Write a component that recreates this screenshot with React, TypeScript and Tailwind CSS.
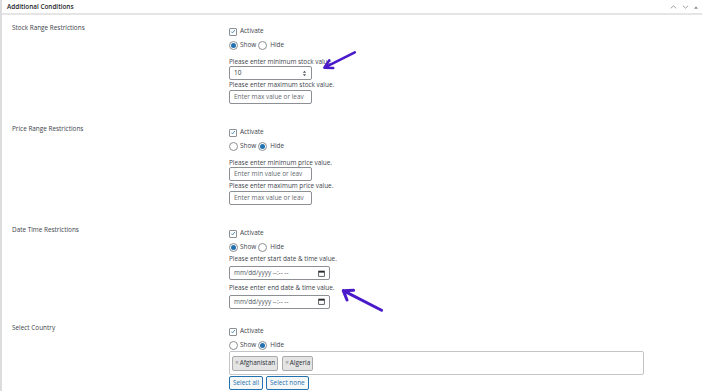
import React from "react";

const font = { fontFamily: '"Open Sans", "Noto Sans", Arial, sans-serif' };

function Check({ label }: { label: string }) {
  return (
    <div className="flex items-center gap-[3px] h-[9px]">
      <span className="flex h-[8px] w-[8px] items-center justify-center rounded-[1px] border border-[#8c8f94] bg-white">
        <svg viewBox="0 0 10 10" className="h-[7px] w-[7px]">
          <path d="M2 5.2 L4.2 7.4 L8.2 2.4" fill="none" stroke="#2271b1" strokeWidth="1.3" />
        </svg>
      </span>
      <span>{label}</span>
    </div>
  );
}

function Radio({ on, className = "" }: { on: boolean; className?: string }) {
  return (
    <span className={`flex h-[9px] w-[9px] items-center justify-center rounded-full border border-[#8c8f94] bg-white ${className}`}>
      {on && <span className="h-[5px] w-[5px] rounded-full bg-[#2271b1]" />}
    </span>
  );
}

function ShowHide({ show }: { show: boolean }) {
  return (
    <div className="flex items-center h-[9px] mt-[5px]">
      <Radio on={show} />
      <span className="ml-[2px]">Show</span>
      <Radio on={!show} className="ml-[2px]" />
      <span className="ml-[3px]">Hide</span>
    </div>
  );
}

function TextBox({ value, placeholder }: { value?: string; placeholder?: string }) {
  return (
    <div className="flex h-[14px] w-[83px] items-center justify-between rounded-[2px] border border-[#8c8f94] bg-white px-[4px]">
      {value ? <span className="text-[#2c3338]">{value}</span> : <span className="text-[#646970]">{placeholder}</span>}
      {value && (
        <svg viewBox="0 0 6 10" className="h-[9px] w-[5px]">
          <path d="M1 4 L3 1.8 L5 4 Z M1 6 L3 8.2 L5 6 Z" fill="#50575e" />
        </svg>
      )}
    </div>
  );
}

function DateBox() {
  return (
    <div className="flex h-[14px] w-[101px] items-center justify-between rounded-[2px] border border-[#8c8f94] bg-white px-[4px]">
      <span className="text-[#50575e]">mm/dd/yyyy --:-- --</span>
      <svg viewBox="0 0 10 10" className="h-[7px] w-[7px]">
        <rect x="1" y="1.5" width="8" height="7.5" fill="none" stroke="#1d2327" strokeWidth="1" />
        <rect x="1" y="1.5" width="8" height="2.2" fill="#1d2327" />
      </svg>
    </div>
  );
}

function Row({ label, children, h }: { label: string; children: React.ReactNode; h: string }) {
  return (
    <div className={`flex ${h}`}>
      <div className="w-[227px] shrink-0 pl-[10px] pt-[3px]">{label}</div>
      <div className="flex flex-col pt-[5px]">{children}</div>
    </div>
  );
}

function Arrow({ className, d }: { className: string; d: string }) {
  return (
    <svg className={`absolute ${className}`} viewBox="0 0 50 30" fill="none">
      <path d={d} stroke="#4a19c9" strokeWidth="3.2" strokeLinecap="round" strokeLinejoin="round" />
    </svg>
  );
}

export default function App() {
  return (
    <div className="relative h-[391px] w-[702px] overflow-hidden bg-white text-[6.4px] leading-none text-[#3c434a]" style={font}>
      <div className="h-full border-l-2 border-[#dcdcde]">
        <div className="flex h-[15px] items-center justify-between border-b-2 border-[#e5e5e5] pl-[5px] pr-[4px] pt-[1px]">
          <span className="font-semibold text-[#1d2327]">Additional Conditions</span>
          <div className="flex items-center gap-[5px]">
            <svg viewBox="0 0 10 6" className="h-[4px] w-[7px]">
              <path d="M1 5 L5 1.2 L9 5" fill="none" stroke="#8c8f94" strokeWidth="1.3" />
            </svg>
            <svg viewBox="0 0 10 6" className="h-[4px] w-[7px]">
              <path d="M1 1 L5 4.8 L9 1" fill="none" stroke="#8c8f94" strokeWidth="1.3" />
            </svg>
            <svg viewBox="0 0 6 4" className="h-[3px] w-[4px]">
              <path d="M0 4 L3 0 L6 4 Z" fill="#8c8f94" />
            </svg>
          </div>
        </div>

        <div className="pt-[7px]">
          <Row label="Stock Range Restrictions" h="h-[101px]">
            <Check label="Activate" />
            <ShowHide show />
            <span className="mt-[9px]">Please enter minimum stock value.</span>
            <div className="mt-[1px]">
              <TextBox value="10" />
            </div>
            <span className="mt-[2px]">Please enter maximum stock value.</span>
            <div className="mt-[1px]">
              <TextBox placeholder="Enter max value or leav" />
            </div>
          </Row>

          <Row label="Price Range Restrictions" h="h-[101px]">
            <Check label="Activate" />
            <ShowHide show={false} />
            <span className="mt-[9px]">Please enter minimum price value.</span>
            <div className="mt-[1px]">
              <TextBox placeholder="Enter min value or leav" />
            </div>
            <span className="mt-[2px]">Please enter maximum price value.</span>
            <div className="mt-[1px]">
              <TextBox placeholder="Enter max value or leav" />
            </div>
          </Row>

          <Row label="Date Time Restrictions" h="h-[98px]">
            <Check label="Activate" />
            <ShowHide show />
            <span className="mt-[4px]">Please enter start date &amp; time value.</span>
            <div className="mt-[4px]">
              <DateBox />
            </div>
            <span className="mt-[5px]">Please enter end date &amp; time value.</span>
            <div className="mt-[3px]">
              <DateBox />
            </div>
          </Row>

          <Row label="Select Country" h="h-[80px]">
            <Check label="Activate" />
            <ShowHide show={false} />
            <div className="mt-[1px] flex h-[24px] w-[415px] items-center gap-[4px] rounded-[2px] border border-[#c3c4c7] bg-white px-[2px]">
              <span className="flex h-[15px] items-center rounded-[2px] border border-[#aaa] bg-[#e4e4e4] px-[2px] text-[#2c3338]">
                <span className="mr-[1px] text-[#888]">×</span>Afghanistan
              </span>
              <span className="flex h-[15px] items-center rounded-[2px] border border-[#aaa] bg-[#e4e4e4] px-[2px] text-[#2c3338]">
                <span className="mr-[1px] text-[#888]">×</span>Algeria
              </span>
            </div>
            <div className="mt-[1px] flex gap-[3px]">
              <span className="flex h-[14px] items-center rounded-[2px] border border-[#2271b1] bg-[#f6f7f7] px-[3px] text-[#2271b1]">Select all</span>
              <span className="flex h-[14px] items-center rounded-[2px] border border-[#2271b1] bg-[#f6f7f7] px-[3px] text-[#2271b1]">Select none</span>
            </div>
          </Row>
        </div>
      </div>

      <Arrow className="left-[318px] top-[50px] h-[24px] w-[40px]" d="M46 3 L8 22 M8 22 L19 22.5 M8 22 L14 13" />
      <Arrow className="left-[336px] top-[286px] h-[28px] w-[50px]" d="M47 26 L6 5 M6 5 L17 4.5 M6 5 L10 15" />
    </div>
  );
}
